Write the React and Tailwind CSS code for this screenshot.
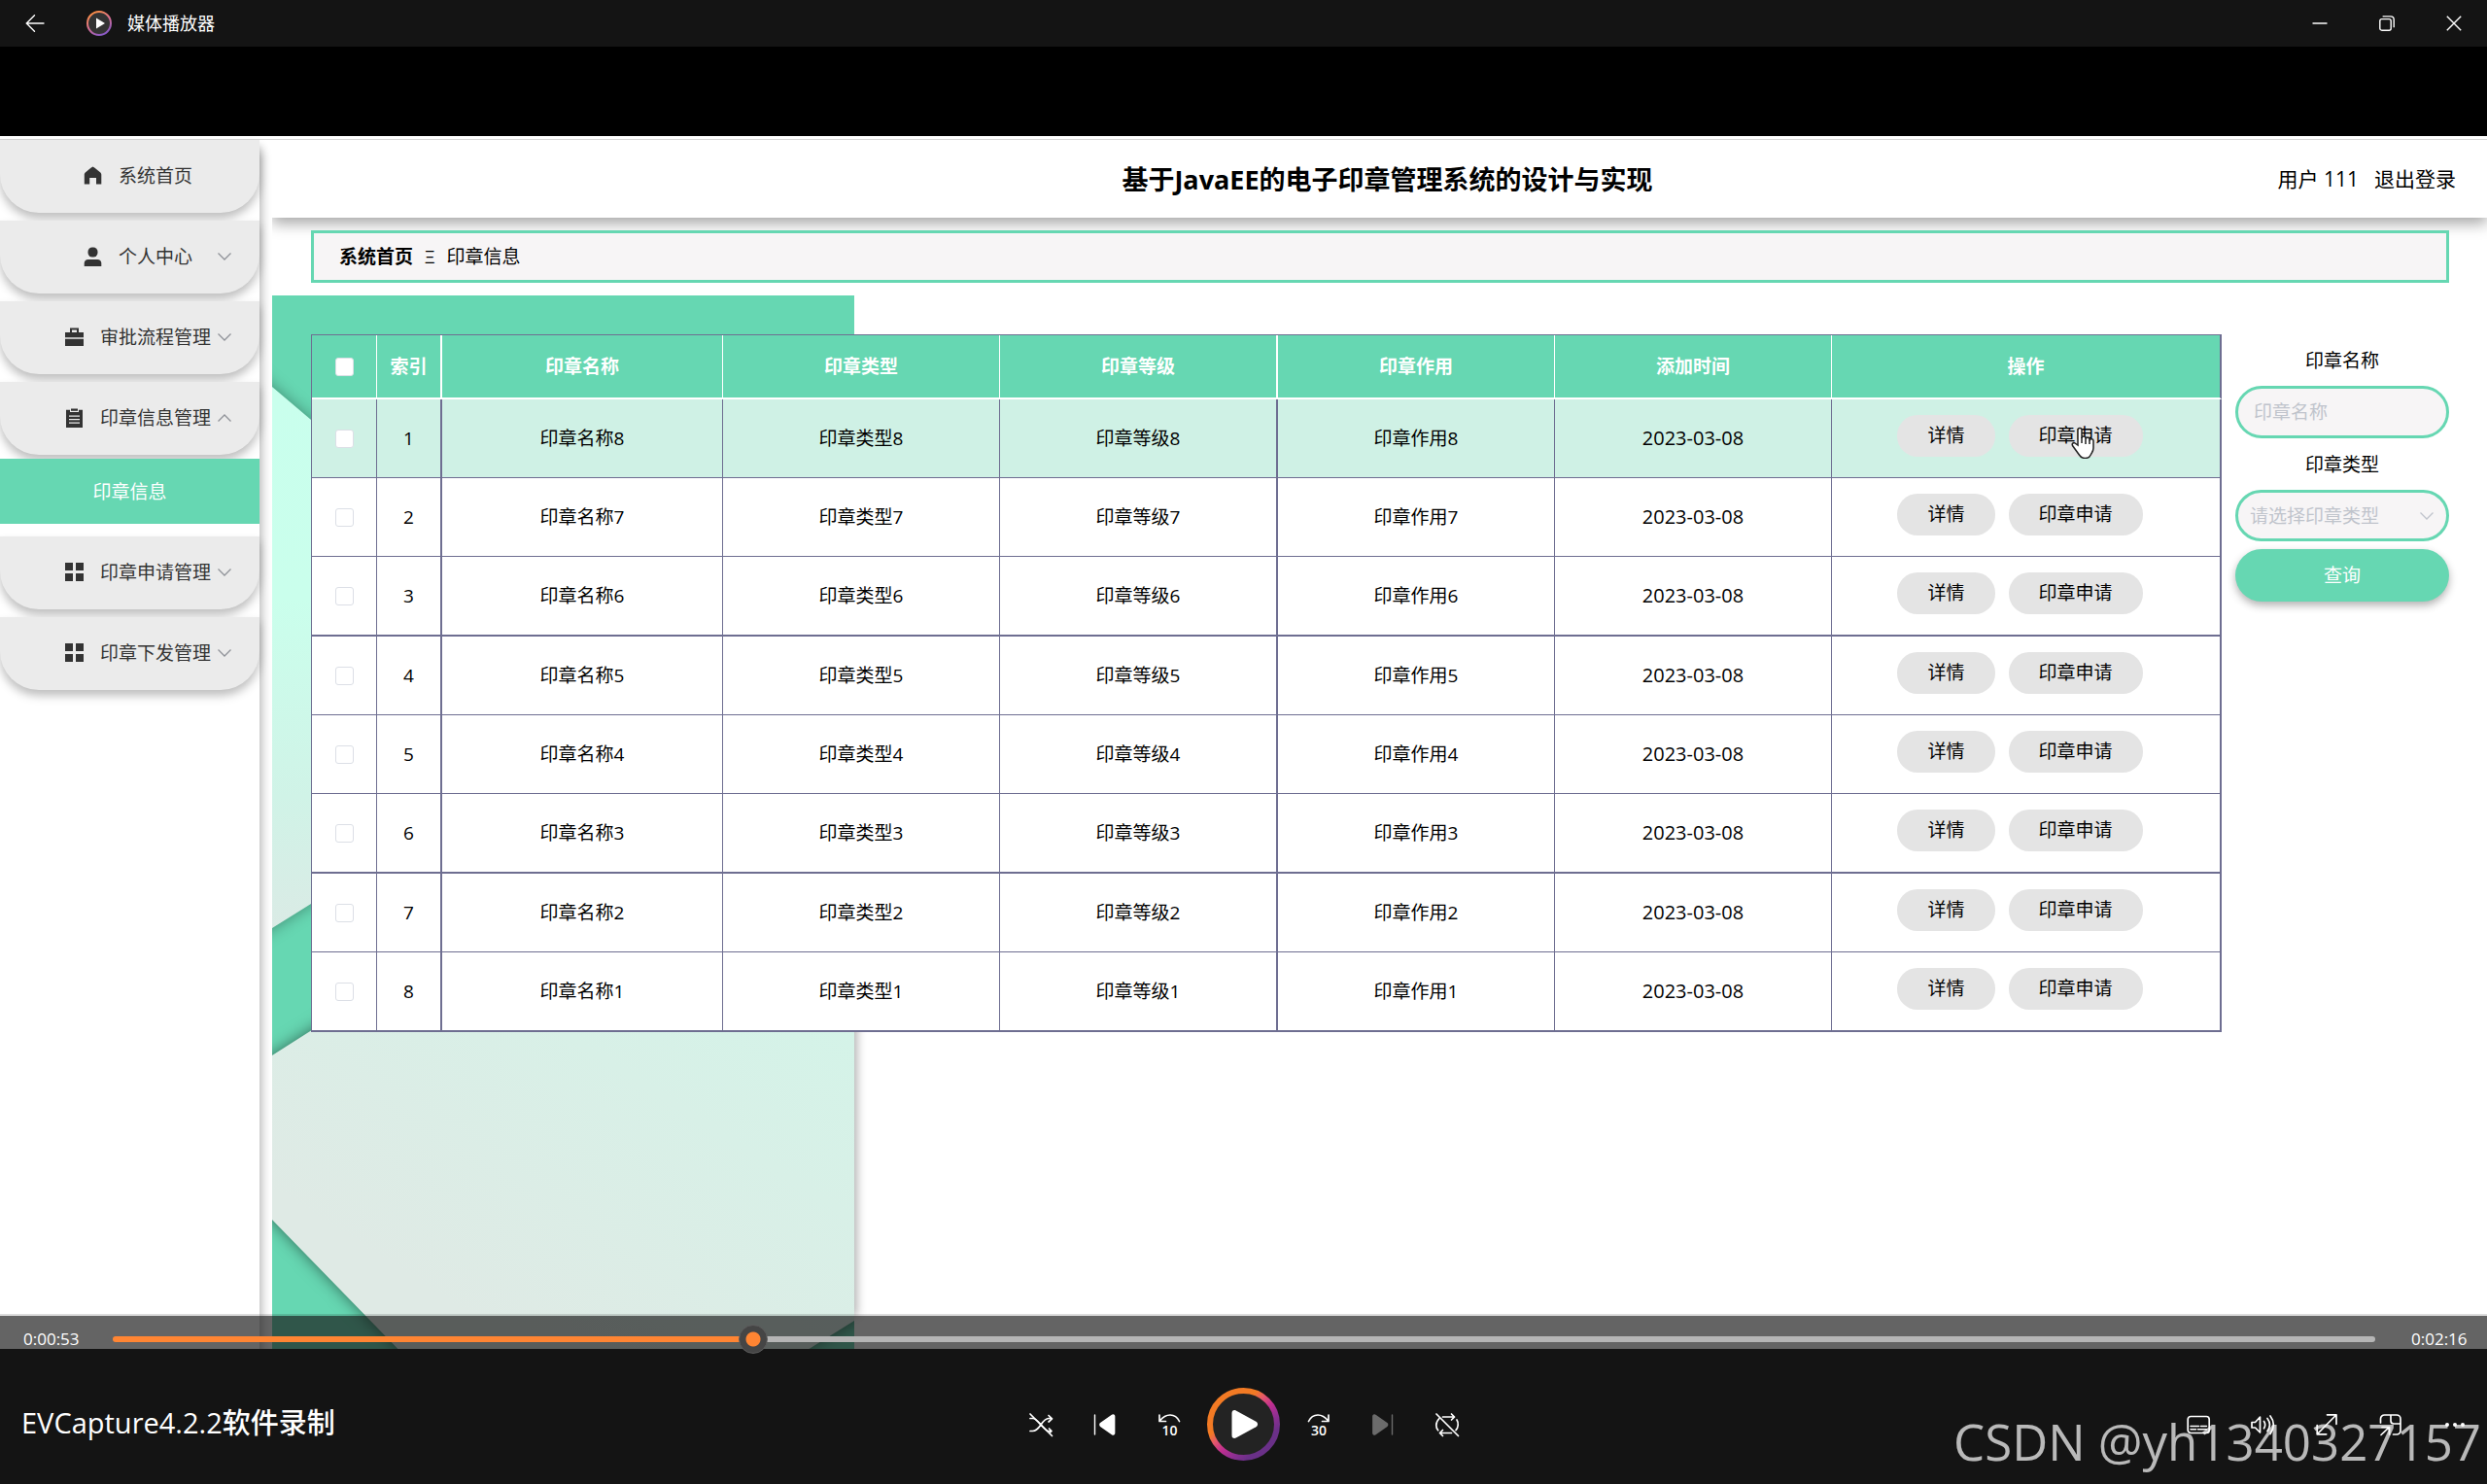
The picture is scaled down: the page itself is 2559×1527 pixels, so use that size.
import clsx from "clsx";

const MENU = [
  { label: "系统首页", icon: HomeIcon },
  { label: "个人中心", icon: UserIcon, arrow: "down" },
  { label: "审批流程管理", icon: BriefcaseIcon, arrow: "down" },
  { label: "印章信息管理", icon: ClipboardIcon, arrow: "up", children: ["印章信息"] },
  { label: "印章申请管理", icon: GridIcon, arrow: "down" },
  { label: "印章下发管理", icon: GridIcon, arrow: "down" },
];

const COLUMNS = ["印章名称", "印章类型", "印章等级", "印章作用", "添加时间", "操作"];

const ROWS = [8, 7, 6, 5, 4, 3, 2, 1].map((n) => ({
  name: `印章名称${n}`,
  type: `印章类型${n}`,
  level: `印章等级${n}`,
  usage: `印章作用${n}`,
  date: "2023-03-08",
}));

const ELAPSED = 53;
const TOTAL = 189;

export default function App() {
  return (
    <div className="flex min-h-screen flex-col bg-black font-['Open_Sans','Noto_Sans_CJK_SC',sans-serif] text-[19px] leading-7 text-black">
      <TitleBar />
      <div className="h-[92px]" />
      <div className="relative flex flex-1 flex-col bg-white pt-[3px]">
        <div className="flex flex-1 border-t border-[#d6d6d6]">
          <Sidebar />
          <Content />
        </div>
        <SeekBar />
      </div>
      <ControlBar />
    </div>
  );
}

function TitleBar() {
  return (
    <header className="flex h-12 items-center bg-[#141414] text-white">
      <button aria-label="返回" className="flex h-full w-[72px] items-center justify-center">
        <svg width="20" height="20" viewBox="0 0 20 20" fill="none" stroke="currentColor" strokeWidth="1.4" strokeLinecap="round">
          <path d="M19 10H1.5M9.5 1.8 1.3 10l8.2 8.2" />
        </svg>
      </button>
      <svg className="ml-[17px]" width="26" height="26" viewBox="0 0 26 26">
        <defs>
          <linearGradient id="logo-ring" x1="0.2" y1="0" x2="0.7" y2="1">
            <stop offset="0" stopColor="#ff9140" />
            <stop offset="0.5" stopColor="#d9708f" />
            <stop offset="1" stopColor="#8458c8" />
          </linearGradient>
        </defs>
        <circle cx="13" cy="13" r="12" fill="#333" stroke="url(#logo-ring)" strokeWidth="2" />
        <path d="M10 7.5v11l9-5.5z" fill="#fff" />
      </svg>
      <span className="ml-4 text-lg">媒体播放器</span>
      <div className="ml-auto flex h-full">
        <button aria-label="最小化" className="flex w-[69px] items-center justify-center">
          <svg width="16" height="16" viewBox="0 0 16 16" stroke="currentColor" strokeWidth="1.5">
            <path d="M0.5 8h15" />
          </svg>
        </button>
        <button aria-label="还原" className="flex w-[69px] items-center justify-center">
          <svg width="16" height="16" viewBox="0 0 16 16" fill="none" stroke="currentColor" strokeWidth="1.4">
            <rect x="0.8" y="3.6" width="11.4" height="11.6" rx="2" />
            <path d="M3.6 0.9h8.2a3.4 3.4 0 0 1 3.4 3.4v8" />
          </svg>
        </button>
        <button aria-label="关闭" className="flex w-[69px] items-center justify-center">
          <svg width="16" height="16" viewBox="0 0 16 16" stroke="currentColor" strokeWidth="1.4">
            <path d="M0.8 0.8 15.2 15.2M15.2 0.8 0.8 15.2" />
          </svg>
        </button>
      </div>
    </header>
  );
}

function Sidebar() {
  return (
    <nav className="w-[267px] shrink-0 bg-white shadow-[2px_12px_10px_rgba(0,0,0,0.3)]">
      <ul className="flex flex-col gap-2 text-[#333]">
        {MENU.map(({ label, icon: Icon, arrow, children }) => (
          <li key={label}>
            <a
              href="#"
              className="flex h-[75px] items-center rounded-b-[40px] bg-[#ebebeb] pb-0.5 pl-[66px] shadow-[0_6px_10px_rgba(0,0,0,0.25)]"
            >
              <span className="flex flex-1 items-center justify-center gap-[17px] whitespace-nowrap">
                <Icon />
                {label}
              </span>
              <span className="flex w-[49px] justify-start pl-1.5">
                {arrow && <Chevron className={clsx("text-[#909399]", arrow === "up" && "rotate-180")} />}
              </span>
            </a>
            {children && (
              <ul className="relative mt-1 mb-[5px]">
                {children.map((child) => (
                  <li key={child}>
                    <a href="#" className="flex h-[67px] items-center justify-center bg-[#66d7b2] text-white">
                      {child}
                    </a>
                  </li>
                ))}
              </ul>
            )}
          </li>
        ))}
      </ul>
    </nav>
  );
}

function Content() {
  return (
    <main className="ml-[13px] flex min-w-0 flex-1 flex-col overflow-hidden">
      <header className="relative flex h-20 items-center justify-center bg-white shadow-[0_6px_14px_rgba(0,0,0,0.35)]">
        <h1 className="pt-0.5 pl-4 text-[27px] font-bold">基于JavaEE的电子印章管理系统的设计与实现</h1>
        <div className="absolute right-8 flex gap-4 text-[21px]">
          <span>用户 111</span>
          <a href="#">退出登录</a>
        </div>
      </header>
      <div className="relative mr-[39px] ml-10 mt-[13px] flex h-[54px] items-center gap-3 border-[3px] border-[#66d7b2] bg-[#f7f5f6] px-[26px]">
        <a href="#" className="font-bold">系统首页</a>
        <span>Ξ</span>
        <span>印章信息</span>
      </div>
      <section className="relative mt-[13px] flex flex-1 items-start overflow-hidden pt-10 pr-[39px] pb-80 pl-10">
        <PaperBackground />
        <SealTable />
        <SearchForm />
      </section>
    </main>
  );
}

function PaperBackground() {
  return (
    <svg className="absolute top-0 left-0" width="620" height="1084" viewBox="0 0 620 1084">
      <defs>
        <linearGradient id="sheet-top" x1="0" y1="0" x2="0" y2="1">
          <stop offset="0" stopColor="#c9ffed" />
          <stop offset="0.4" stopColor="#caffec" />
          <stop offset="0.75" stopColor="#d0f3e7" />
          <stop offset="1" stopColor="#dbeae5" />
        </linearGradient>
        <linearGradient id="sheet-bottom" gradientUnits="userSpaceOnUse" x1="540" y1="560" x2="220" y2="1060">
          <stop offset="0" stopColor="#d1f6e9" />
          <stop offset="1" stopColor="#dfeae5" />
        </linearGradient>
        <clipPath id="sheet-clip">
          <rect width="599" height="1084" />
        </clipPath>
      </defs>
      <rect y="400" width="599" height="650" fill="#66d7b2" className="drop-shadow-[3px_0_5px_rgba(0,0,0,0.3)]" />
      <rect width="599" height="1084" fill="#66d7b2" />
      <g clipPath="url(#sheet-clip)">
        <path d="M-20 77 0 94 330 374V445L0 651l-20 12z" fill="url(#sheet-top)" className="drop-shadow-[0_0_8px_rgba(0,0,0,0.35)]" />
        <path
          d="M-20 794 0 782 620 387V1041L599 1055 530 1098H143L0 951l-20-21z"
          fill="url(#sheet-bottom)"
          className="drop-shadow-[0_0_8px_rgba(0,0,0,0.5)]"
        />
      </g>
    </svg>
  );
}

// columns closed by a two pixel rule
const THICK_COLUMNS = ["印章等级"];

function SealTable() {
  return (
    <table className="relative flex-1 table-fixed border-separate border-spacing-0 border-t border-l border-[#6e6e91] bg-white text-center">
      <colgroup>
        <col className="w-[67px]" />
        <col className="w-[67px]" />
        <col className="w-[289px]" />
        <col className="w-[285px]" />
        <col className="w-[286px]" />
        <col className="w-[285px]" />
        <col className="w-[285px]" />
        <col />
      </colgroup>
      <thead>
        <tr className="h-[66px] bg-[#66d7b2] text-white">
          <th className="border-r border-b-2 border-white p-0">
            <Checkbox label="全选" />
          </th>
          <th className="border-r-2 border-b-2 border-white p-0">索引</th>
          {COLUMNS.map((title) => (
            <th
              key={title}
              className={clsx(
                "border-b-2 border-white p-0",
                THICK_COLUMNS.includes(title) ? "border-r-2" : "border-r",
                title === "操作" && "border-r-2 border-r-[#6e6e91]"
              )}
            >
              {title}
            </th>
          ))}
        </tr>
      </thead>
      <tbody>
        {ROWS.map((row, i) => (
          <Row key={row.name} row={row} index={i + 1} />
        ))}
      </tbody>
    </table>
  );
}

function Row({ row, index }) {
  const thick = index % 3 === 0 || index === ROWS.length;
  const cell = clsx("border-[#6e6e91] p-0", thick ? "border-b-2" : "border-b");
  return (
    <tr className={clsx(thick ? "h-[82px]" : "h-[81px]", index === 1 && "bg-[#cff1e5]")}>
      <td className={clsx(cell, "border-r")}>
        <Checkbox label={`选择${row.name}`} />
      </td>
      <td className={clsx(cell, "border-r-2")}>{index}</td>
      <td className={clsx(cell, "border-r")}>{row.name}</td>
      <td className={clsx(cell, "border-r")}>{row.type}</td>
      <td className={clsx(cell, "border-r-2")}>{row.level}</td>
      <td className={clsx(cell, "border-r")}>{row.usage}</td>
      <td className={clsx(cell, "border-r text-xl")}>{row.date}</td>
      <td className={clsx(cell, "border-r-2")}>
        <div className="flex justify-center gap-3.5 pr-3 pb-1.5">
          <PillButton>详情</PillButton>
          <span className="relative">
            <PillButton>印章申请</PillButton>
            {index === 1 && <HandCursor />}
          </span>
        </div>
      </td>
    </tr>
  );
}

function PillButton({ children }) {
  return <button className="h-[43px] rounded-[21px] bg-[#e4e4e4] px-[31px] whitespace-nowrap">{children}</button>;
}

function Checkbox({ label }) {
  return (
    <input
      type="checkbox"
      aria-label={label}
      className="mx-auto block size-[19px] appearance-none rounded-[3px] border border-[#dcdfe6] bg-white"
    />
  );
}

function SearchForm() {
  return (
    <form className="relative ml-3.5 flex w-[220px] shrink-0 flex-col">
      <label htmlFor="seal-name" className="flex h-[53px] items-center justify-center">印章名称</label>
      <input
        id="seal-name"
        placeholder="印章名称"
        className="h-[54px] w-full rounded-[27px] border-[3px] border-[#66d7b2] bg-[#f7f5f6] px-4 placeholder:text-[#c0c4cc]"
      />
      <label htmlFor="seal-type" className="flex h-[53px] items-center justify-center">印章类型</label>
      <div className="relative">
        <select
          id="seal-type"
          className="h-[53px] w-full appearance-none rounded-[27px] border-[3px] border-[#66d7b2] bg-[#f7f5f6] px-3 text-[#c0c4cc]"
        >
          <option>请选择印章类型</option>
        </select>
        <Chevron className="pointer-events-none absolute top-5 right-4 text-[#c0c4cc]" />
      </div>
      <button type="button" className="mt-2 h-[54px] rounded-[27px] bg-[#66d7b2] text-white shadow-[0_4px_8px_rgba(0,0,0,0.3)]">
        查询
      </button>
    </form>
  );
}

function SeekBar() {
  const percent = (ELAPSED / TOTAL) * 100;
  return (
    <div className="absolute inset-x-0 bottom-0 z-10 flex h-9 items-start border-t-2 border-[#141414]/15 bg-[#141414]/66 bg-clip-padding pt-[9px] text-[17px] leading-[30px] text-white">
      <span className="w-[116px] pl-6">0:00:53</span>
      <input
        type="range"
        aria-label="播放进度"
        min="0"
        max={TOTAL}
        defaultValue={ELAPSED}
        style={{ "--played": `${percent}%` }}
        className="h-[30px] flex-1 appearance-none bg-transparent [&::-webkit-slider-runnable-track]:h-1.5 [&::-webkit-slider-runnable-track]:rounded-full [&::-webkit-slider-runnable-track]:bg-[linear-gradient(to_right,#ff8533_var(--played),#b5b5b5_var(--played))] [&::-webkit-slider-thumb]:-mt-3 [&::-webkit-slider-thumb]:size-[30px] [&::-webkit-slider-thumb]:appearance-none [&::-webkit-slider-thumb]:rounded-full [&::-webkit-slider-thumb]:border [&::-webkit-slider-thumb]:border-[#5c5c5c] [&::-webkit-slider-thumb]:bg-[radial-gradient(circle,#ff8533_7px,#454545_8px)]"
      />
      <span className="w-[115px] pl-[37px]">0:02:16</span>
    </div>
  );
}

function ControlBar() {
  return (
    <footer className="relative grid h-[139px] grid-cols-[1fr_auto_1fr] items-center bg-[#141414] pt-4 text-white">
      <h2 className="pb-1 pl-5.5 text-[29px] leading-10 font-medium">EVCapture4.2.2软件录制</h2>
      <div className="flex items-center">
        <IconButton label="随机播放">
          <path d="M1 5.5h2.5c3 0 5 2.2 7.5 5.3S16 17 19 18.5h4M1 18.5h2.5c4 0 6.5-3.5 8.5-6.5 2-3 4.5-6.5 8-6.5h3M20 2.5l3.5 3.3L20 9M20.5 16l2.5 2.5-1.5 1.5" />
          <path d="M1 1l22.5 22.5" />
        </IconButton>
        <IconButton label="上一个">
          <path d="M1.5 2v20" strokeWidth="1.4" />
          <path d="M21.5 3.2v17.6c0 1-1 1.5-1.8.9L7.6 13.2c-.8-.6-.8-1.8 0-2.4L19.7 2.3c.8-.6 1.8-.1 1.8.9z" fill="currentColor" />
        </IconButton>
        <IconButton label="后退10秒">
          <path d="M2 2v6.5h6.5M2.3 8C6 3.5 10 2 13 2c4 0 7.5 2.2 9.5 6.5" />
          <text x="12.5" y="23" className="fill-white stroke-none text-[14px] font-semibold" textAnchor="middle">10</text>
        </IconButton>
        <button aria-label="播放" className="flex w-[88px] justify-center">
          <svg width="75" height="75" viewBox="0 0 75 75">
            <defs>
              <linearGradient id="play-ring" x1="0.15" y1="0.1" x2="0.85" y2="0.85">
                <stop offset="0.3" stopColor="#f27a24" />
                <stop offset="0.42" stopColor="#e5586a" />
                <stop offset="0.58" stopColor="#c02e90" />
                <stop offset="0.75" stopColor="#8f2f92" />
                <stop offset="0.92" stopColor="#6a3088" />
              </linearGradient>
            </defs>
            <circle cx="37.5" cy="37.5" r="34.5" fill="#232323" stroke="url(#play-ring)" strokeWidth="6" />
            <path d="M25.5 26v23c0 2.6 2.2 3.6 4.3 2.5l20.6-11.2c2.2-1.2 2.2-4.4 0-5.6L29.8 23.5c-2.1-1.1-4.3-.1-4.3 2.5z" fill="#fff" />
          </svg>
        </button>
        <IconButton label="前进30秒">
          <path d="M22 2v6.5h-6.5M21.7 8C18 3.5 14 2 11 2 7 2 3.5 4.2 1.5 8.5" />
          <text x="12" y="23" className="fill-white stroke-none text-[14px] font-semibold" textAnchor="middle">30</text>
        </IconButton>
        <IconButton label="下一个" className="text-[#6b6b6b]">
          <path d="M21.5 2v20" strokeWidth="1.4" />
          <path d="M2 3.2v17.6c0 1 1 1.5 1.8.9l12.1-8.5c.8-.6.8-1.8 0-2.4L3.8 2.3C3 1.7 2 2.200 2 3.200z" fill="currentColor" />
        </IconButton>
        <IconButton label="重复播放">
          <path d="M7.5 4h12M16.5 1l3 3-3 3M16.5 20.5h-12M7.5 17.500l-3 3 3 3M4 5.500C1.500 8 .8 10 .8 12.500c0 2.500.8 4 1.900 5.300M22 7c1 1.500 1.400 3.500 1.200 5.500-.2 2.500-1 4-2.200 5.200" />
          <path d="M1 1l22.5 22.5" />
        </IconButton>
      </div>
      <div className="flex items-center justify-end">
        <IconButton label="字幕">
          <rect x="1.2" y="3.5" width="22" height="17" rx="3" />
          <path d="M4 13.5h8.5M14.5 13.5h6M4 16.7h5.5M11.5 16.7h9" strokeWidth="1.5" />
        </IconButton>
        <IconButton label="音量">
          <path d="M1 9.5v5.5h3.500l5 5V4l-5 5.500zM13.500 8.500c1.500 2.300 1.500 5 0 7.300M17 5.500c3 4 3 9.200 0 13.200M20 3c4.200 5.500 4.200 12.500 0 18.500" />
        </IconButton>
        <IconButton label="全屏">
          <path d="M12.5 1.8h9.5v9.500M21.8 2 2.5 21.5M2.2 12.5v9.3h9.500" />
        </IconButton>
        <IconButton label="迷你播放器">
          <path d="M1.5 10V6a4 4 0 0 1 4-4H18a4 4 0 0 1 4 4v12a4 4 0 0 1-4 4h-3.500M12 2v6a3 3 0 0 0 3 3h7M3 14.5h7.500V22M10.3 14.700 2 22.500" />
        </IconButton>
        <IconButton label="更多">
          <g fill="currentColor" stroke="none">
            <circle cx="4" cy="12" r="2" />
            <circle cx="12" cy="12" r="2" />
            <circle cx="20" cy="12" r="2" />
          </g>
        </IconButton>
      </div>
      <span className="pointer-events-none absolute right-1.5 bottom-2 text-[51px] leading-[72px] text-white/70">
        CSDN @yh1340327157
      </span>
    </footer>
  );
}

function IconButton({ label, className, children }) {
  return (
    <button aria-label={label} className={clsx("flex w-[66px] justify-center", className)}>
      <svg width="24" height="24" viewBox="0 0 24 24" fill="none" stroke="currentColor" strokeWidth="1.7" strokeLinecap="round" strokeLinejoin="round" className="overflow-visible">
        {children}
      </svg>
    </button>
  );
}

function Chevron({ className }) {
  return (
    <svg className={className} width="14" height="14" viewBox="0 0 14 14" fill="none" stroke="currentColor" strokeWidth="1.3">
      <path d="M0.5 3.5 7 10l6.5-6.5" />
    </svg>
  );
}

function HandCursor() {
  return (
    <svg className="pointer-events-none absolute top-3 left-16" width="24" height="33" viewBox="0 0 24 33">
      <path
        d="M7 19V3.500a2 2 0 0 1 4 0V12a2 2 0 0 1 4 0v1a2 2 0 0 1 4 .5v1a2 2 0 0 1 4 .5v7c0 3-1.500 4.500-2.500 6.500-.8 2-3 4-6 4s-5-1.500-6.500-4L1.500 19.500c-1-2 1-3.500 2.500-2.500z"
        fill="#fff"
        stroke="#222"
        strokeWidth="1.5"
      />
      <path d="M11 11v6M15 13v5M19 14v4" stroke="#222" strokeWidth="1.5" />
    </svg>
  );
}

function HomeIcon() {
  return (
    <svg width="19" height="19" viewBox="0 0 19 19" fill="currentColor">
      <path d="M9.5 0.5 11.5 1.8 17 6.2c.9.7 1.3 1.5 1.3 2.5V18.5H13v-6.500H6.200v6.500H.8V8.700c0-1 .4-1.800 1.300-2.500L7.500 1.800z" />
    </svg>
  );
}

function UserIcon() {
  return (
    <svg width="19" height="20" viewBox="0 0 19 20" fill="currentColor">
      <rect x="4.5" y="0.5" width="10" height="10" rx="4.5" />
      <path d="M.7 20v-3.200c0-2.300 1.800-3.800 4-3.800h9.600c2.200 0 4 1.500 4 3.800V20z" />
    </svg>
  );
}

function BriefcaseIcon() {
  return (
    <svg width="19" height="19" viewBox="0 0 19 19" fill="currentColor">
      <path d="M5 5V.5h9V5h5v5.2H0V5zM7 5h5V2.500H7zM0 11.800h19V19H0z" fillRule="evenodd" />
    </svg>
  );
}

function ClipboardIcon() {
  return (
    <svg width="19" height="20" viewBox="0 0 19 20" fill="currentColor">
      <path d="M1 1.8h4V4h9V1.8h4V20H1zM4 7.5v1.2h11V7.500zM4 11v1.200h11V11zM4 14.500v1.200h11v-1.200z" fillRule="evenodd" />
      <path d="M6 .5h7v2.300H6z" />
    </svg>
  );
}

function GridIcon() {
  return (
    <svg width="19" height="19" viewBox="0 0 19 19" fill="currentColor">
      <path d="M0 0h8v8H0zM11 0h8v8h-8zM0 11h8v8H0zM11 11h8v8h-8z" />
    </svg>
  );
}
